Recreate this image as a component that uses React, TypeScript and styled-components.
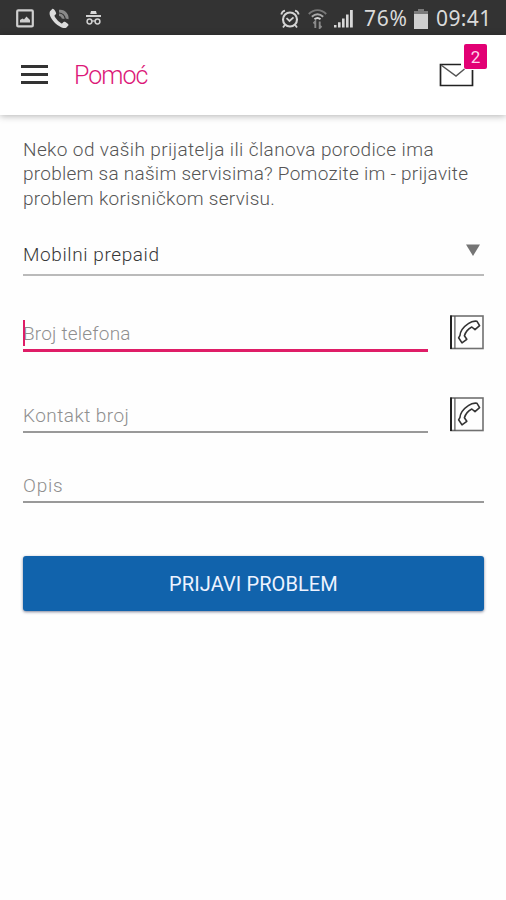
import React from "react";
import styled, { createGlobalStyle } from "styled-components";

const GlobalStyle = createGlobalStyle`
  *, *::before, *::after { box-sizing: border-box; }
  html, body { margin: 0; padding: 0; background: #fefefe; }
  body { font-family: Roboto, "Liberation Sans", sans-serif; font-weight: 300; }
`;

const Screen = styled.div`
  width: 506px;
  height: 900px;
  overflow: hidden;
  background: #fefefe;
`;

const StatusBar = styled.div`
  display: flex;
  justify-content: space-between;
  height: 35px;
  padding: 0 14px 0 16px;
  background: #333;
  color: #dadada;
`;

const StatusGroup = styled.div`
  display: flex;
  align-items: center;
  height: 37px;
`;

const StatusIcon = styled.svg<{ $gap: number }>`
  display: block;
  flex: none;
  margin-right: ${(p) => p.$gap}px;
`;

const StatusText = styled.span<{ $width: number; $spacing: number }>`
  width: ${(p) => p.$width}px;
  font-family: "Noto Sans", sans-serif;
  font-size: 21px;
  font-weight: 400;
  line-height: 37px;
  white-space: nowrap;
  letter-spacing: ${(p) => p.$spacing}px;
`;

const AppBar = styled.header`
  display: flex;
  align-items: center;
  height: 80px;
  padding: 0 19px 0 21px;
  background: #fff;
  box-shadow: 0 1px 7px rgba(0, 0, 0, 0.3);
`;

const MenuButton = styled.button`
  display: flex;
  flex-direction: column;
  gap: 5px;
  width: 27px;
  margin-top: -2px;
  padding: 0;
  border: 0;
  background: none;
`;

const MenuLine = styled.span`
  height: 3px;
  background: #333;
`;

const Title = styled.h1`
  flex: 1;
  margin: 2px 0 0 26px;
  color: #dc1878;
  font-size: 25px;
  font-weight: 300;
  line-height: 30px;
  letter-spacing: -1px;
`;

const Inbox = styled.div`
  position: relative;
  width: 48px;
  height: 44px;
  margin-top: -16px;
`;

const Envelope = styled.svg`
  position: absolute;
  left: 0;
  top: 18px;
`;

const Badge = styled.span`
  position: absolute;
  right: 0;
  top: -1px;
  width: 23px;
  height: 25px;
  border-radius: 2px;
  background: #e20074;
  color: #ffd5ec;
  font-size: 17px;
  font-weight: 400;
  line-height: 26px;
  text-align: center;
`;

const Form = styled.main`
  display: flex;
  flex-direction: column;
  padding: 23px 22px 0 23px;
`;

const Intro = styled.p`
  margin: 0;
  color: #555;
  font-size: 19px;
  line-height: 24.4px;
`;

const IntroLine = styled.span<{ $spacing: number }>`
  display: block;
  white-space: nowrap;
  letter-spacing: ${(p) => p.$spacing}px;
`;

const Select = styled.div`
  display: flex;
  justify-content: space-between;
  height: 40px;
  margin-top: 25px;
  padding: 7px 4px 0 0;
  border-bottom: 2px solid #bababa;
  color: #383838;
  font-size: 19px;
  line-height: 24px;
  letter-spacing: 0.6px;
`;

const Arrow = styled.svg`
  margin-top: 1px;
`;

const FieldRow = styled.div<{ $top: number }>`
  display: flex;
  justify-content: space-between;
  align-items: flex-start;
  margin-top: ${(p) => p.$top}px;
`;

const Field = styled.div<{ $wide?: boolean; $active?: boolean }>`
  position: relative;
  width: ${(p) => (p.$wide ? 461 : 405)}px;
  height: ${(p) => (p.$active ? 37 : 36)}px;
  padding-top: 7px;
  border-bottom: ${(p) => (p.$active ? "3px solid #df1d67" : "2px solid #999")};
  color: #8f8f8f;
  font-size: 19px;
  line-height: 24px;
`;

const Placeholder = styled.span<{ $spacing: number }>`
  letter-spacing: ${(p) => p.$spacing}px;
`;

const Caret = styled.span`
  position: absolute;
  left: 0;
  top: 5px;
  width: 2px;
  height: 26px;
  background: #df1d67;
`;

const SubmitButton = styled.button`
  height: 55px;
  margin-top: 53px;
  padding: 2px 0 0;
  border: 0;
  border-radius: 3px;
  background: #1163ac;
  box-shadow: 0 1px 3px rgba(20, 30, 70, 0.55);
  color: #eef3ff;
  font-family: Roboto, sans-serif;
  font-size: 20px;
  font-weight: 400;
  line-height: 53px;
  letter-spacing: 0.1px;
`;

const PhonebookIcon = () => (
  <svg width="34" height="35" viewBox="0 0 34 35" fill="none">
    <rect x="1" y="1" width="32" height="32.5" stroke="#707070" strokeWidth="1.6" />
    <path d="M1 .5V34" stroke="#222" strokeWidth="2" />
    <path d="M4.9 1V34" stroke="#555" strokeWidth="1.2" />
    <path
      d="M8.6 22.8L12 27.9L16.8 24.3L14.4 20.8C15.4 17.4 18.6 13.6 21.8 12L25 14.6L29.6 10.6L27 6.3C24.6 5.8 20.8 6.9 18.3 8.7C14 11.6 10.3 15.8 9.9 20.7Z"
      stroke="#333"
      strokeWidth="1.6"
      strokeLinejoin="round"
    />
  </svg>
);

export default function App() {
  return (
    <Screen>
      <GlobalStyle />
      <StatusBar>
        <StatusGroup>
          <StatusIcon $gap={15} width="18" height="19" viewBox="0 0 18 19">
            <rect x="1.2" y="1.4" width="15.6" height="16" rx="1" fill="none" stroke="#cfcfcf" strokeWidth="2.2" />
            <path d="M4 13.5V11L6.5 9.5 8 10.5 10.5 7.5 14 11V13.5Z" fill="#cfcfcf" />
          </StatusIcon>
          <StatusIcon $gap={16} width="21" height="21" viewBox="0 0 21 21">
            <path
              d="M1 3.2L3.5.8C4.5 0 7 3.8 7.2 5.2 7.2 6.4 5.2 7 5.5 8 6.5 10.5 10 14 12.5 15.5 13.5 15.8 14 13.8 15.3 13.7 16.5 13.8 20 16 19.5 17.2L17.2 19.8C11.5 22-2 9.5 1 3.2Z"
              fill="#dcdcdc"
            />
            <path d="M10 1.8C15.5.7 20.5 6 19.5 11.3L16.8 10.5A7 7 0 0 0 10 4.4ZM10 5.5C13.5 5.7 15.5 8 15.5 11L12.7 10.4C12.5 9 11.5 8.3 10 8Z" fill="#898989" />
          </StatusIcon>
          <StatusIcon $gap={0} width="15" height="17" viewBox="0 0 15 17" fill="none" stroke="#d0d0d0">
            <path d="M4.2 4L5 1H10L10.8 4Z" fill="#d8d8d8" stroke="none" />
            <path d="M0 6H15" strokeWidth="2" />
            <circle cx="3.5" cy="11.5" r="2.4" strokeWidth="1.5" />
            <circle cx="11.5" cy="11.5" r="2.4" strokeWidth="1.5" />
            <path d="M6 11H9" strokeWidth="1.3" />
          </StatusIcon>
        </StatusGroup>
        <StatusGroup>
          <StatusIcon $gap={8} width="20" height="20" viewBox="0 0 20 20" fill="none" stroke="#d4d4d4">
            <circle cx="10" cy="10.5" r="7" strokeWidth="2.1" />
            <path d="M1.3 5.5C1.7 3.3 3 2 5 1.6M15 1.6C17 2 18.3 3.3 18.7 5.5M4.8 16L3 18.5M15.2 16L17 18.5" strokeWidth="1.8" />
            <path d="M6.5 9.2L9.5 12L13.5 8.3" strokeWidth="1.8" />
          </StatusIcon>
          <StatusIcon $gap={7} width="19" height="20" viewBox="0 0 19 20" fill="none" strokeWidth="1.9">
            <path d="M.8 5C6-.2 13-.2 18.2 5" stroke="#777" />
            <path d="M3.8 7.8C7.5 4.5 11.5 4.5 15.2 7.8" stroke="#aaa" />
            <path d="M6.5 10.2C8.5 8.5 10.5 8.5 12.5 10.2" stroke="#d4d4d4" />
            <path d="M7.3 19V12.5L5.5 14.5M11.7 12.5V19L13.5 17" stroke="#8a8a8a" />
          </StatusIcon>
          <StatusIcon $gap={11} width="19" height="19" viewBox="0 0 19 19" fill="#d8d8d8">
            <path d="M0 16H2.5V18.5H0ZM4 13.2H6.6V18.5H4ZM8 9.5H10.6V18.5H8ZM12 5.5H14.6V18.5H12ZM16 1H18.8V18.5H16Z" />
          </StatusIcon>
          <StatusText $width={50} $spacing={0.8}>76%</StatusText>
          <StatusIcon $gap={8} width="14" height="20" viewBox="0 0 14 20">
            <path d="M4 0H10V2H14V5H0V2H4Z" fill="#7b7b7b" />
            <path d="M0 5H14V20H0Z" fill="#d0d0d0" />
          </StatusIcon>
          <StatusText $width={56} $spacing={0.4}>09:41</StatusText>
        </StatusGroup>
      </StatusBar>

      <AppBar>
        <MenuButton aria-label="Meni">
          <MenuLine />
          <MenuLine />
          <MenuLine />
        </MenuButton>
        <Title>Pomoć</Title>
        <Inbox>
          <Envelope width="35" height="24" viewBox="0 0 35 24" fill="none" stroke="#222">
            <path d="M22 1.5H1.5V22.5H33.5V7" strokeWidth="1.7" />
            <path d="M2 2L17 13L25.5 6" stroke="#555" strokeWidth="1.5" />
          </Envelope>
          <Badge>2</Badge>
        </Inbox>
      </AppBar>

      <Form>
        <Intro>
          <IntroLine $spacing={0.39}>Neko od vaših prijatelja ili članova porodice ima</IntroLine>
          <IntroLine $spacing={0.26}>problem sa našim servisima? Pomozite im - prijavite</IntroLine>
          <IntroLine $spacing={0.3}>problem korisničkom servisu.</IntroLine>
        </Intro>
        <Select>
          Mobilni prepaid
          <Arrow width="14" height="12" viewBox="0 0 14 12">
            <path d="M0 .5H14L7 12Z" fill="#757575" />
          </Arrow>
        </Select>
        <FieldRow $top={39}>
          <Field $active>
            <Placeholder $spacing={0.2}>Broj telefona</Placeholder>
            <Caret />
          </Field>
          <PhonebookIcon />
        </FieldRow>
        <FieldRow $top={45}>
          <Field>
            <Placeholder $spacing={0.45}>Kontakt broj</Placeholder>
          </Field>
          <PhonebookIcon />
        </FieldRow>
        <FieldRow $top={34}>
          <Field $wide>
            <Placeholder $spacing={0.8}>Opis</Placeholder>
          </Field>
        </FieldRow>
        <SubmitButton>PRIJAVI PROBLEM</SubmitButton>
      </Form>
    </Screen>
  );
}
